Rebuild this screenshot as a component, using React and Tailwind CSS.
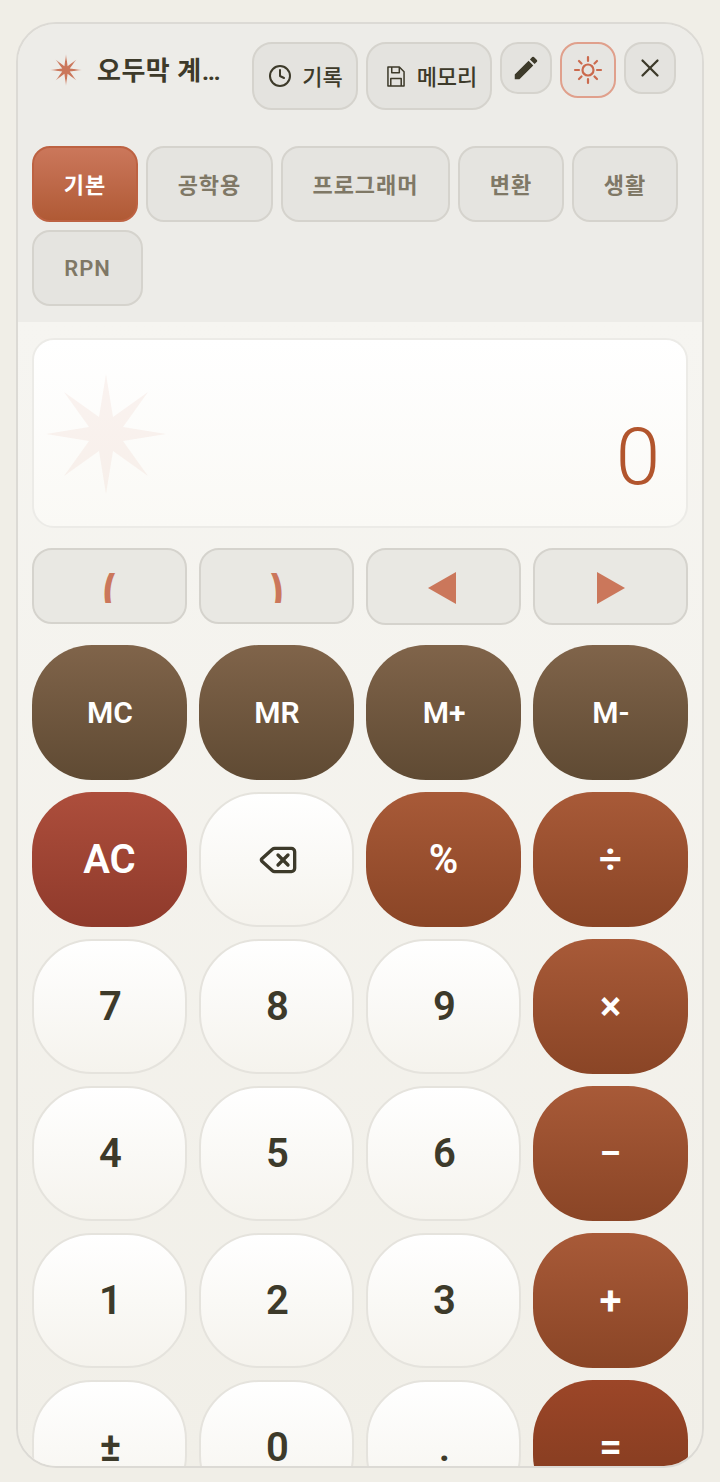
import { Clock, X, Delete } from "lucide-react";
import { MdEdit } from "react-icons/md";

const TABS = ["기본", "공학용", "프로그래머", "변환", "생활", "RPN"];
const TAB_WIDTHS = ["w-[106px]", "w-[127px]", "w-[169px]", "w-[106px]", "w-[106px]", "w-[111px]"];

const STAR_POINTS = "60,0 67,43 102,18 77,53 120,60 77,67 102,102 67,77 60,120 53,77 18,102 43,67 0,60 43,53 18,18 53,43";
const LOGO_POINTS = "60,0 66,46 99,21 74,54 120,60 74,66 99,99 66,74 60,120 54,74 21,99 46,66 0,60 46,54 21,21 54,46";

const SUN_RAYS = [
  [16, 3, 16, 7],
  [16, 25, 16, 29],
  [3, 16, 7, 16],
  [25, 16, 29, 16],
  [7, 7, 9.5, 9.5],
  [22.5, 22.5, 25, 25],
  [7, 25, 9.5, 22.5],
  [22.5, 9.5, 25, 7],
];

const KEYS = [
  { label: "MC", kind: "memory" },
  { label: "MR", kind: "memory" },
  { label: "M+", kind: "memory" },
  { label: "M-", kind: "memory" },
  { label: "AC", kind: "clear" },
  { label: "back", kind: "num" },
  { label: "%", kind: "op" },
  { label: "÷", kind: "op" },
  { label: "7", kind: "num" },
  { label: "8", kind: "num" },
  { label: "9", kind: "num" },
  { label: "×", kind: "op" },
  { label: "4", kind: "num" },
  { label: "5", kind: "num" },
  { label: "6", kind: "num" },
  { label: "−", kind: "op" },
  { label: "1", kind: "num" },
  { label: "2", kind: "num" },
  { label: "3", kind: "num" },
  { label: "+", kind: "op" },
  { label: "±", kind: "num" },
  { label: "0", kind: "num" },
  { label: ".", kind: "num" },
  { label: "=", kind: "equals" },
];

const KEY_STYLES = {
  memory: "bg-gradient-to-b from-[#80644a] to-[#5f4a33] text-white text-[30px] pl-px",
  clear: "bg-gradient-to-b from-[#ad4e3c] to-[#8f3a2b] text-white text-[40px]",
  op: "bg-gradient-to-b from-[#a85a38] to-[#8a4526] text-white text-[40px]",
  equals: "bg-gradient-to-b from-[#9c4628] to-[#7f3a1e] text-white text-[40px]",
  num: "bg-gradient-to-b from-white to-[#f5f3ed] text-[#3d3a2a] text-[40px] pl-[2px] border-2 border-[#e5e3dd]",
};

function ToolButton({ icon, label, className }) {
  return (
    <button className={`h-[68px] shrink-0 flex items-center justify-center rounded-[20px] border-2 border-[#d5d3cd] bg-[#e4e3df] text-[22px] font-medium text-[#3d3a2a] ${className}`}>
      {icon}
      <span className="pt-[2px]">{label}</span>
    </button>
  );
}

function IconButton({ children, className }) {
  return (
    <button className={`shrink-0 flex items-center justify-center rounded-[18px] border-2 ${className}`}>
      {children}
    </button>
  );
}

function AuxButton({ children, className }) {
  return (
    <button className={`flex items-center justify-center rounded-[20px] border-2 border-[#d5d3cd] bg-[#e9e8e3] ${className}`}>
      {children}
    </button>
  );
}

export default function App() {
  return (
    <div className="h-[1482px] bg-[#f0eee7] px-4 pt-[22px] pb-[14px] font-[Roboto,'Noto_Sans_CJK_KR',sans-serif]">
      <div className="h-full flex flex-col overflow-hidden rounded-[40px] border-2 border-[#dcdad5]">
        <header className="h-[298px] shrink-0 bg-[#edece8] px-[14px] pt-[18px]">
          <div className="flex items-start">
            <div className="h-[56px] w-[220px] shrink-0 flex items-center pl-[18px]">
              <svg width="32" height="32" viewBox="0 0 120 120" className="shrink-0">
                <defs>
                  <radialGradient id="logo-fade">
                    <stop offset="0.55" stopColor="#cb775b" />
                    <stop offset="1" stopColor="#cb775b" stopOpacity="0.35" />
                  </radialGradient>
                </defs>
                <polygon points={LOGO_POINTS} fill="url(#logo-fade)" />
              </svg>
              <span className="ml-[15px] w-[124px] truncate pt-[2px] text-[26px] font-semibold tracking-[0.5px] text-[#3d3a2a]">오두막 계산기</span>
            </div>
            <ToolButton icon={<Clock size={24} strokeWidth={2} />} label="기록" className="w-[106px] gap-[10px] pl-px" />
            <ToolButton
              icon={
                <svg width="18" height="21" viewBox="0 0 19 22" fill="none" stroke="currentColor" strokeWidth="1.6" strokeLinejoin="round">
                  <path d="M1 1H13L18 6V21H1Z" />
                  <path d="M5 1V7H13V1" />
                  <path d="M4 21V13H15V21" />
                </svg>
              }
              label="메모리"
              className="w-[126px] ml-2 gap-3 pl-[6px]"
            />
            <IconButton className="w-[52px] h-[52px] ml-2 border-[#d5d3cd] bg-[#e4e3df] text-[#3d3a2a]">
              <MdEdit size={30} />
            </IconButton>
            <IconButton className="w-[56px] h-[56px] ml-2 border-[#e0a08c] bg-[#e6e5e1] text-[#cb6a4d]">
              <svg width="32" height="32" viewBox="0 0 32 32" fill="none" stroke="currentColor" strokeWidth="2.2" strokeLinecap="round">
                <circle cx="16" cy="16" r="5.5" />
                {SUN_RAYS.map((ray) => (
                  <line key={ray.join()} x1={ray[0]} y1={ray[1]} x2={ray[2]} y2={ray[3]} />
                ))}
              </svg>
            </IconButton>
            <IconButton className="w-[52px] h-[52px] ml-2 border-[#d5d3cd] bg-[#e4e3df] text-[#3d3a2a]">
              <X size={30} strokeWidth={1.8} />
            </IconButton>
          </div>
          <div className="mt-9 flex flex-wrap gap-2">
            {TABS.map((tab, i) => (
              <button
                key={tab}
                className={`h-[76px] rounded-[18px] border-2 text-[22px] font-semibold tracking-[1px] ${TAB_WIDTHS[i]} ${
                  i < 5 ? "pt-[3px]" : ""
                } ${
                  i === 0
                    ? "border-[#bd6242] bg-gradient-to-b from-[#cb775b] to-[#b05a35] text-white"
                    : "border-[#d5d3cd] bg-[#e5e4e0] text-[#7f7866]"
                }`}
              >
                {tab}
              </button>
            ))}
          </div>
        </header>

        <main className="flex-1 min-h-0 overflow-hidden bg-gradient-to-b from-[#f6f5f1] to-[#f1efe8] px-[14px] pt-4">
          <div className="relative h-[190px] flex items-end justify-end rounded-[22px] border-2 border-[#ecebe7] bg-gradient-to-b from-white to-[#faf9f5] pr-[26px] pb-[22px]">
            <svg width="120" height="120" viewBox="0 0 120 120" className="absolute left-3 top-[34px]">
              <polygon points={STAR_POINTS} fill="#cb775b" fillOpacity="0.08" />
            </svg>
            <span className="text-[80px] leading-[94px] font-light text-[#b2552d]">0</span>
          </div>

          <div className="mt-5 grid grid-cols-4 items-start gap-3">
            <AuxButton className="h-[76px]">
              <span className="mt-[3px] h-[30px] overflow-hidden font-['Noto_Sans_CJK_KR'] text-[48px] leading-[30px] font-bold text-[#cb775b]">(</span>
            </AuxButton>
            <AuxButton className="h-[76px]">
              <span className="mt-[3px] h-[30px] overflow-hidden font-['Noto_Sans_CJK_KR'] text-[48px] leading-[30px] font-bold text-[#cb775b]">)</span>
            </AuxButton>
            <AuxButton className="h-[77px]">
              <svg width="28" height="32" viewBox="0 0 28 32" className="mt-[3px] -ml-[3px]"><polygon points="0,16 28,0 28,32" fill="#cb775b" /></svg>
            </AuxButton>
            <AuxButton className="h-[77px]">
              <svg width="28" height="32" viewBox="0 0 28 32" className="mt-[3px] ml-px"><polygon points="28,16 0,0 0,32" fill="#cb775b" /></svg>
            </AuxButton>
          </div>

          <div className="mt-5 grid grid-cols-4 gap-3">
            {KEYS.map((key) => (
              <button
                key={key.label}
                className={`h-[135px] flex items-center justify-center rounded-[60px] font-[580] ${KEY_STYLES[key.kind]}`}
              >
                {key.label === "back" ? <Delete size={40} strokeWidth={2} /> : key.label}
              </button>
            ))}
          </div>
        </main>
      </div>
    </div>
  );
}
